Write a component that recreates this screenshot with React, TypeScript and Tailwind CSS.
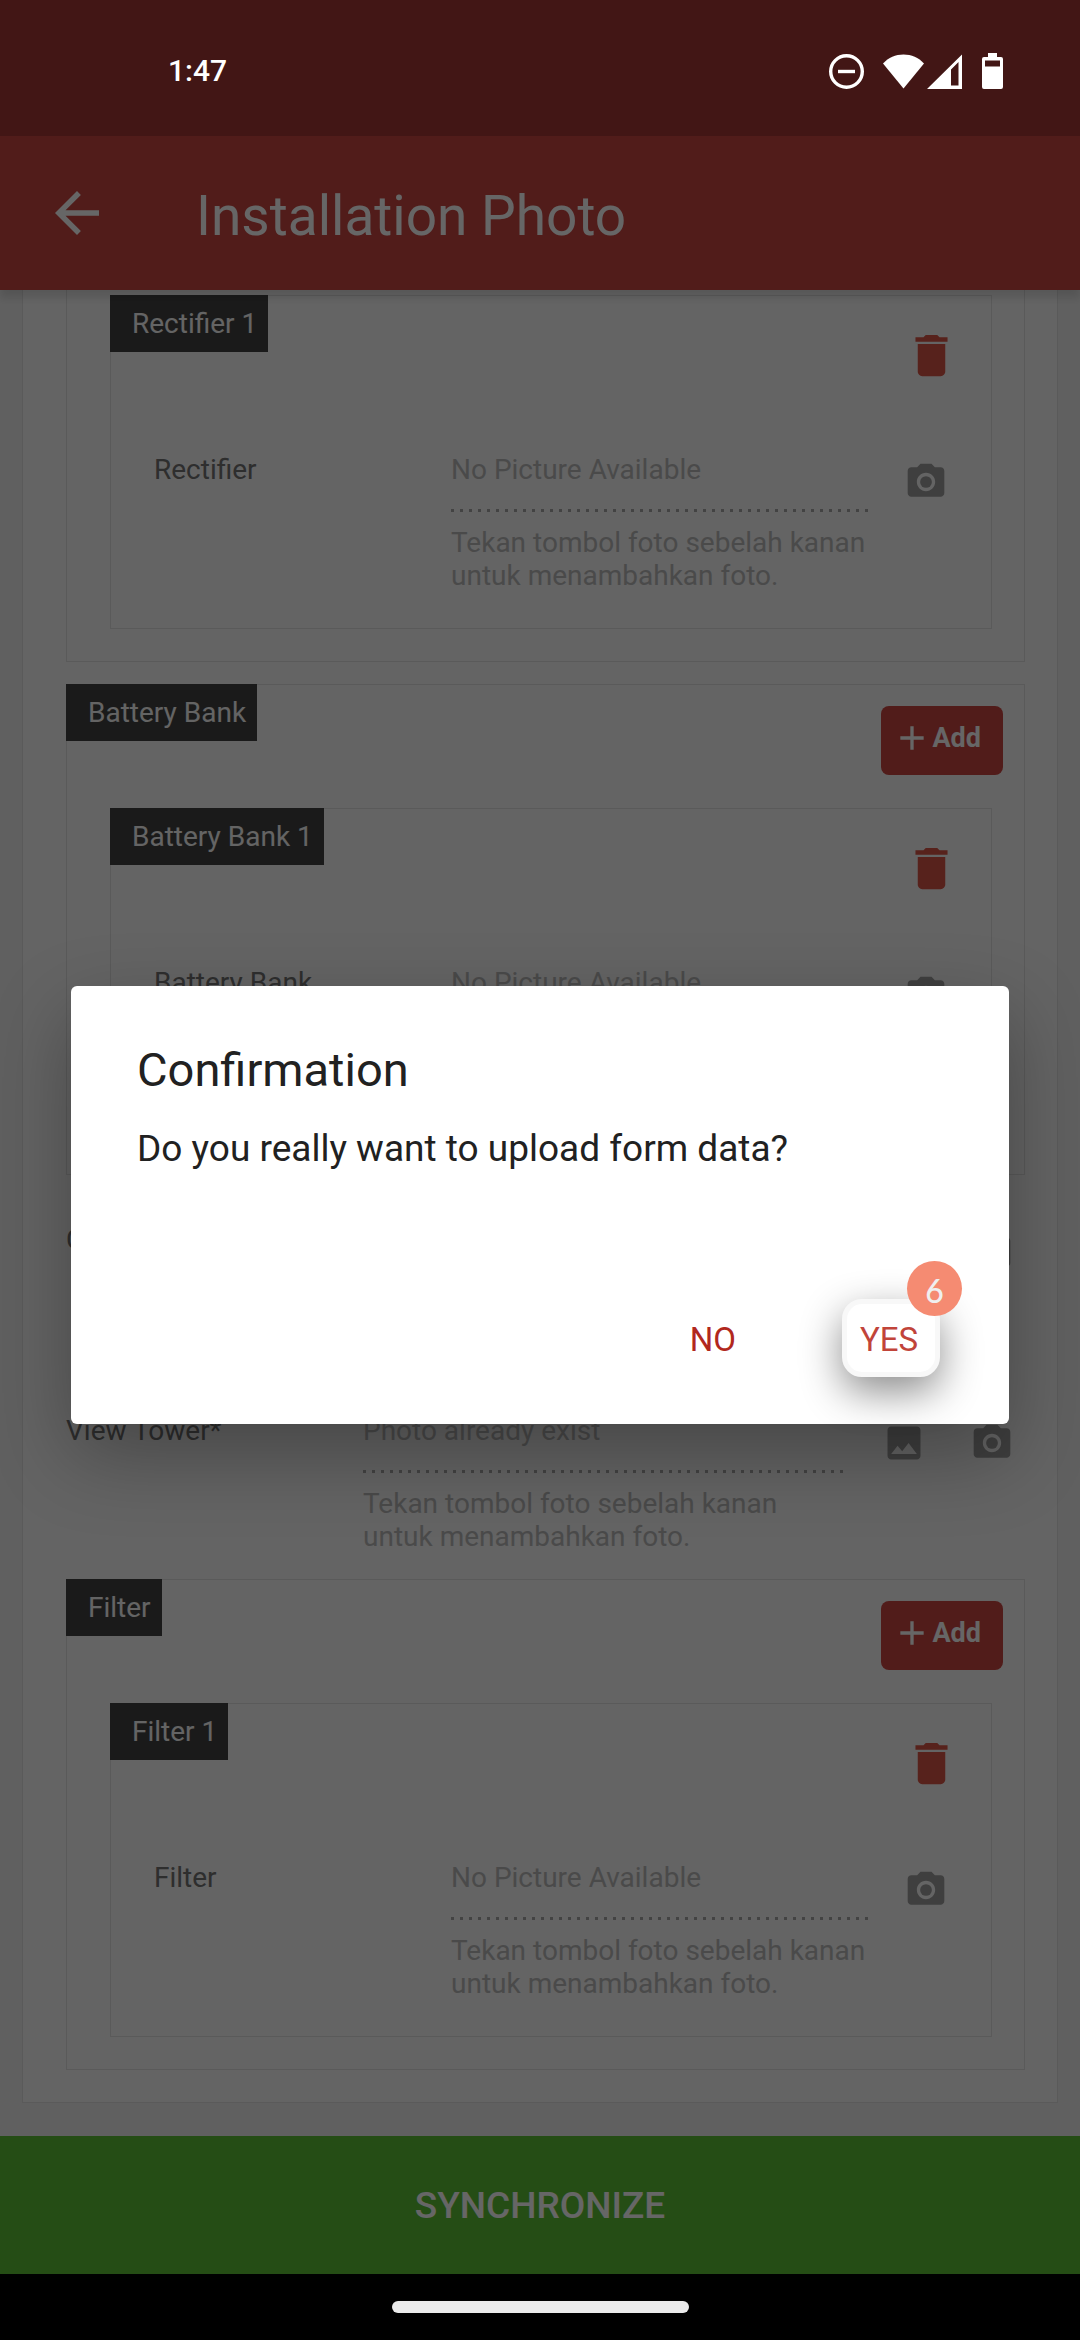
import React from 'react';
import { MdAdd, MdArrowBack, MdDelete, MdImage, MdPhotoCamera } from 'react-icons/md';

interface PhotoRowProps {
    label: string;
    value: string;
    hasPhoto?: boolean;
}

const PhotoRow: React.FC<PhotoRowProps> = ({ label, value, hasPhoto }) => (
    <div className="flex items-start pt-[26px] pb-1 pr-[11px] text-[28px] leading-[33px]">
        <p className="w-[297px] shrink-0 text-[#737373]">{label}</p>
        <div className="min-w-0 flex-1 text-[#b9b9b9]">
            <p>{value}</p>
            {/* Dotted underline */}
            <div className="mt-[23px] mb-[14px] h-[3px] bg-[repeating-linear-gradient(90deg,#a8a8a8_0_3px,transparent_3px_9px)]" />
            <p>
                Tekan tombol foto sebelah kanan
                <br />
                untuk menambahkan foto.
            </p>
        </div>
        <div className="mt-[7px] ml-[33px] flex shrink-0 gap-[44px] text-[#9e9e9e]">
            {hasPhoto && (
                <button type="button" aria-label={`View ${label}`}>
                    <MdImage size={44} />
                </button>
            )}
            <button type="button" aria-label={`Take ${label}`}>
                <MdPhotoCamera size={44} />
            </button>
        </div>
    </div>
);

const Chip: React.FC<{ text: string }> = ({ text }) => (
    <h2 className="-mt-px -ml-px bg-[#434343] py-3 pr-[11px] pl-[22px] text-[28px] leading-[33px] text-[#fafafa]">
        {text}
    </h2>
);

const PhotoItem: React.FC<{ name: string }> = ({ name }) => (
    <div className="border border-[#e1e1e1] pb-8">
        <div className="flex items-start justify-between pr-8">
            <Chip text={`${name} 1`} />
            <button type="button" aria-label={`Delete ${name} 1`} className="mt-8 text-[#da5546]">
                <MdDelete size={55} />
            </button>
        </div>
        <div className="mt-[44px] pr-8 pl-[43px]">
            <PhotoRow label={name} value="No Picture Available" />
        </div>
    </div>
);

const PhotoGroup: React.FC<{ name: string }> = ({ name }) => (
    <section className="border border-[#e1e1e1] pb-8">
        <div className="flex items-start justify-between pr-[21px]">
            <Chip text={name} />
            <button
                type="button"
                className="mt-[21px] flex h-[69px] items-start rounded-lg bg-[#ca4641] pt-3 pr-[22px] pl-[11px] text-white"
            >
                <MdAdd size={40} />
                <span className="text-[27px] leading-[40px] font-bold">Add</span>
            </button>
        </div>
        <div className="mt-[33px] pr-8 pl-[43px]">
            <PhotoItem name={name} />
        </div>
    </section>
);

const StatusBar: React.FC = () => (
    <div className="relative z-20 flex h-[136px] items-center justify-between pt-[6px] pr-[77px] pl-[168px] text-white">
        <span className="text-[30px] leading-[36px] font-medium">1:47</span>
        <div className="flex items-center">
            {/* Do not disturb */}
            <svg width="35" height="35" viewBox="0 0 35 35" fill="none" stroke="currentColor">
                <circle cx="17.5" cy="17.5" r="15.8" strokeWidth="3.4" />
                <path d="M9 17.5h17" strokeWidth="3.4" />
            </svg>
            {/* Wifi */}
            <svg className="ml-[19px]" width="41" height="35" viewBox="0 0 41 35" fill="currentColor">
                <path d="M0 9.5C5.500 3.500 12.500 .5 20.500 .5S35.500 3.500 41 9.500L20.500 34.500z" />
            </svg>
            {/* Signal */}
            <svg className="ml-[3px]" width="35" height="35" viewBox="0 0 35 35" fill="currentColor">
                <path fillRule="evenodd" d="M35 .5V35H0zM24 15.500V31.500H31.500V8z" />
            </svg>
            {/* Battery */}
            <svg className="ml-5" width="21" height="36" viewBox="0 0 21 36" fill="currentColor">
                <path
                    fillRule="evenodd"
                    d="M6 0h9v4h4a2 2 0 0 1 2 2v28a2 2 0 0 1-2 2H2a2 2 0 0 1-2-2V6a2 2 0 0 1 2-2h4zM3 7.500v6h15v-6z"
                />
            </svg>
        </div>
    </div>
);

const ConfirmDialog: React.FC = () => (
    <div className="absolute inset-0 z-10 flex items-center bg-black/60 px-[71px] pt-[136px] pb-[66px]">
        <div
            role="dialog"
            aria-labelledby="confirm-title"
            className="flex-1 rounded-md bg-white pt-14 pr-[69px] pb-[47px] pl-[66px] text-[#212121] shadow-[0_30px_80px_rgba(0,0,0,0.3)]"
        >
            <h2 id="confirm-title" className="text-[47px] leading-[56px]">
                Confirmation
            </h2>
            <p className="mt-[29px] text-[37px] leading-[44px]">Do you really want to upload form data?</p>
            <div className="mt-32 flex items-stretch justify-end text-[33px] leading-[38px]">
                <button type="button" className="mr-[88px] px-[18px] pt-[3px] text-[#b1281d]">
                    NO
                </button>
                <div className="relative">
                    <button
                        type="button"
                        className="h-[78px] w-[98px] rounded-[20px] border-[5px] border-[#f8f8f8] bg-white pt-[3px] pr-1 text-[#c1443a] shadow-[0_15px_40px_rgba(0,0,0,0.45)]"
                    >
                        YES
                    </button>
                    <span className="absolute -top-[38px] -right-[22px] flex size-[55px] items-center justify-center rounded-full bg-[#f58b72] pt-1 font-[Lato] text-[32px] font-medium text-[#efefef]">
                        6
                    </span>
                </div>
            </div>
        </div>
    </div>
);

export default function App() {
    return (
        <div className="relative flex min-h-screen flex-col bg-[#f0f0f0] font-[Roboto,sans-serif]">
            <div className="bg-[#a53735]">
                <StatusBar />
            </div>

            <header className="relative flex h-[154px] items-center gap-[86px] bg-[#ca4641] pl-[44px] text-white shadow-[0_8px_8px_rgba(0,0,0,0.12)]">
                <button type="button" aria-label="Back">
                    <MdArrowBack size={66} />
                </button>
                <h1 className="pt-[6px] text-[55px] leading-[64px]">Installation Photo</h1>
            </header>

            <main className="flex-1 px-[22px] pb-[33px]">
                <div className="flex flex-col gap-[22px] border border-t-0 border-[#e1e1e1] bg-[#fafafa] pr-8 pb-8 pl-[43px]">
                    {/* Tail of the rectifier group */}
                    <section className="border border-t-0 border-[#e1e1e1] pt-[5px] pr-8 pb-8 pl-[43px]">
                        <PhotoItem name="Rectifier" />
                    </section>
                    <PhotoGroup name="Battery Bank" />
                    <PhotoRow label="Cabinet*" value="Photo already exist" hasPhoto />
                    <PhotoRow label="View Tower*" value="Photo already exist" hasPhoto />
                    <PhotoGroup name="Filter" />
                </div>
            </main>

            <button type="button" className="h-[138px] bg-[#5dc035] pt-[2px] text-[37px] font-medium text-white">
                SYNCHRONIZE
            </button>

            <div className="relative z-20 flex h-[66px] items-center justify-center bg-black">
                <div className="h-3 w-[297px] rounded-full bg-[#ebebeb]" />
            </div>

            <ConfirmDialog />
        </div>
    );
}
